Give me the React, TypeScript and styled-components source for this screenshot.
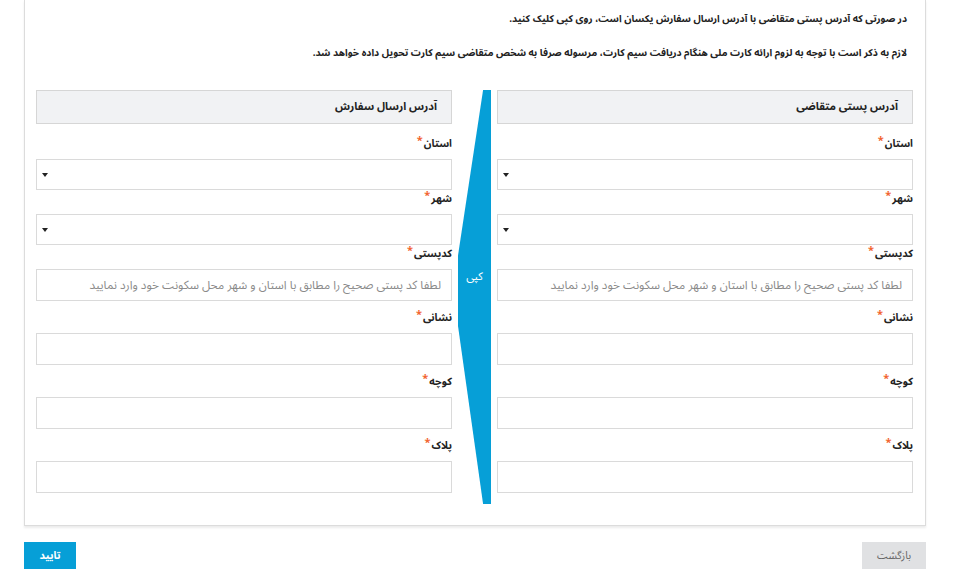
import React from "react";
import styled, { createGlobalStyle } from "styled-components";

const FONT = `"Noto Sans Arabic", "DejaVu Sans", sans-serif`;

const GlobalStyle = createGlobalStyle`
  html, body {
    margin: 0;
    padding: 0;
    background: #ffffff;
  }
  body {
    font-family: ${FONT};
    color: #222;
  }
`;

const Page = styled.div`
  direction: rtl;
  width: 955px;
  padding: 0 29px 0 24px;
  box-sizing: border-box;
`;

const Panel = styled.div`
  border: 1px solid #dcdcdc;
  border-top: none;
  box-shadow: 0 2px 2px rgba(0, 0, 0, 0.08);
  padding: 11px 12px 21px 11px;
`;

const Note = styled.p`
  margin: 0 6px 0 0;
  font-size: 9.9px;
  font-weight: bold;
  line-height: 16px;
  color: #222;

  & + & {
    margin-top: 18px;
  }
`;

const Columns = styled.div`
  display: grid;
  grid-template-columns: 416px 45px 416px;
  margin-top: 29px;
`;

const Column = styled.div`
  display: flex;
  flex-direction: column;
  padding-bottom: 11px;
`;

const ColumnHeader = styled.div`
  height: 32px;
  border: 1px solid #d6d6d6;
  background: #f1f2f4;
  display: flex;
  align-items: center;
  padding: 0 14px;
  font-size: 11px;
  line-height: 16px;
  font-weight: bold;
  color: #222;
  margin-bottom: 11px;
`;

const Label = styled.label`
  display: block;
  height: 18px;
  line-height: 18px;
  font-size: 10.5px;
  font-weight: bold;
  color: #222;
  margin-bottom: 6px;
`;

const Star = styled.span`
  color: #f26430;
  font-size: 11px;
  margin-right: 1px;
  position: relative;
  top: -3px;
`;

const SelectBox = styled.div`
  height: 31px;
  border: 1px solid #dadada;
  box-sizing: border-box;
  display: flex;
  align-items: center;
  justify-content: flex-end;
  padding-left: 5px;
`;

const Caret = styled.span`
  width: 0;
  height: 0;
  border-left: 3.5px solid transparent;
  border-right: 3.5px solid transparent;
  border-top: 4px solid #222;
`;

const TextInput = styled.input`
  display: block;
  width: 100%;
  height: 32px;
  box-sizing: border-box;
  border: 1px solid #dadada;
  padding: 0 10px;
  margin: 0 0 8px 0;
  font-family: ${FONT};
  font-size: 11.8px;
  direction: rtl;
  outline: none;

  &::placeholder {
    color: #8a8a8a;
  }

  &:last-child {
    margin-bottom: 0;
  }
`;

const CopyColumn = styled.div`
  display: flex;
  justify-content: flex-start;
  padding-right: 6px;
`;

const CopyButton = styled.button`
  width: 33px;
  height: 100%;
  border: none;
  padding: 0;
  background: #069fd7;
  clip-path: polygon(100% 0, 76% 0, 0 40%, 0 57%, 76% 100%, 100% 100%);
  color: #ffffff;
  font-family: ${FONT};
  font-size: 11px;
  line-height: 14px;
  display: flex;
  align-items: flex-start;
  justify-content: center;
  padding-top: 180px;
  cursor: pointer;
`;

const Actions = styled.div`
  display: flex;
  justify-content: space-between;
  margin-top: 16px;
`;

const Button = styled.button<{ primary?: boolean }>`
  height: 27px;
  min-width: ${(p) => (p.primary ? "52px" : "64px")};
  border: none;
  padding: 0 14px;
  background: ${(p) => (p.primary ? "#069fd7" : "#e0e1e3")};
  color: ${(p) => (p.primary ? "#ffffff" : "#666666")};
  font-family: ${FONT};
  font-size: 10.5px;
  line-height: 14px;
  font-weight: ${(p) => (p.primary ? "bold" : "normal")};
  cursor: pointer;
`;

const postalHint =
  "لطفا کد پستی صحیح را مطابق با استان و شهر محل سکونت خود وارد نمایید";

function Req({ children }: { children: React.ReactNode }) {
  return (
    <Label>
      {children}
      <Star>*</Star>
    </Label>
  );
}

function AddressColumn({ title }: { title: string }) {
  return (
    <Column>
      <ColumnHeader>{title}</ColumnHeader>
      <Req>استان</Req>
      <SelectBox>
        <Caret />
      </SelectBox>
      <Req>شهر</Req>
      <SelectBox>
        <Caret />
      </SelectBox>
      <Req>کدپستی</Req>
      <TextInput placeholder={postalHint} />
      <Req>نشانی</Req>
      <TextInput />
      <Req>کوچه</Req>
      <TextInput />
      <Req>پلاک</Req>
      <TextInput />
    </Column>
  );
}

export default function App() {
  return (
    <Page>
      <GlobalStyle />
      <Panel>
        <Note>
          در صورتی که آدرس پستی متقاضی با آدرس ارسال سفارش یکسان است، روی کپی
          کلیک کنید.
        </Note>
        <Note>
          لازم به ذکر است با توجه به لزوم ارائه کارت ملی هنگام دریافت سیم کارت،
          مرسوله صرفا به شخص متقاضی سیم کارت تحویل داده خواهد شد.
        </Note>
        <Columns>
          <AddressColumn title="آدرس پستی متقاضی" />
          <CopyColumn>
            <CopyButton>کپی</CopyButton>
          </CopyColumn>
          <AddressColumn title="آدرس ارسال سفارش" />
        </Columns>
      </Panel>
      <Actions>
        <Button>بازگشت</Button>
        <Button primary>تایید</Button>
      </Actions>
    </Page>
  );
}
